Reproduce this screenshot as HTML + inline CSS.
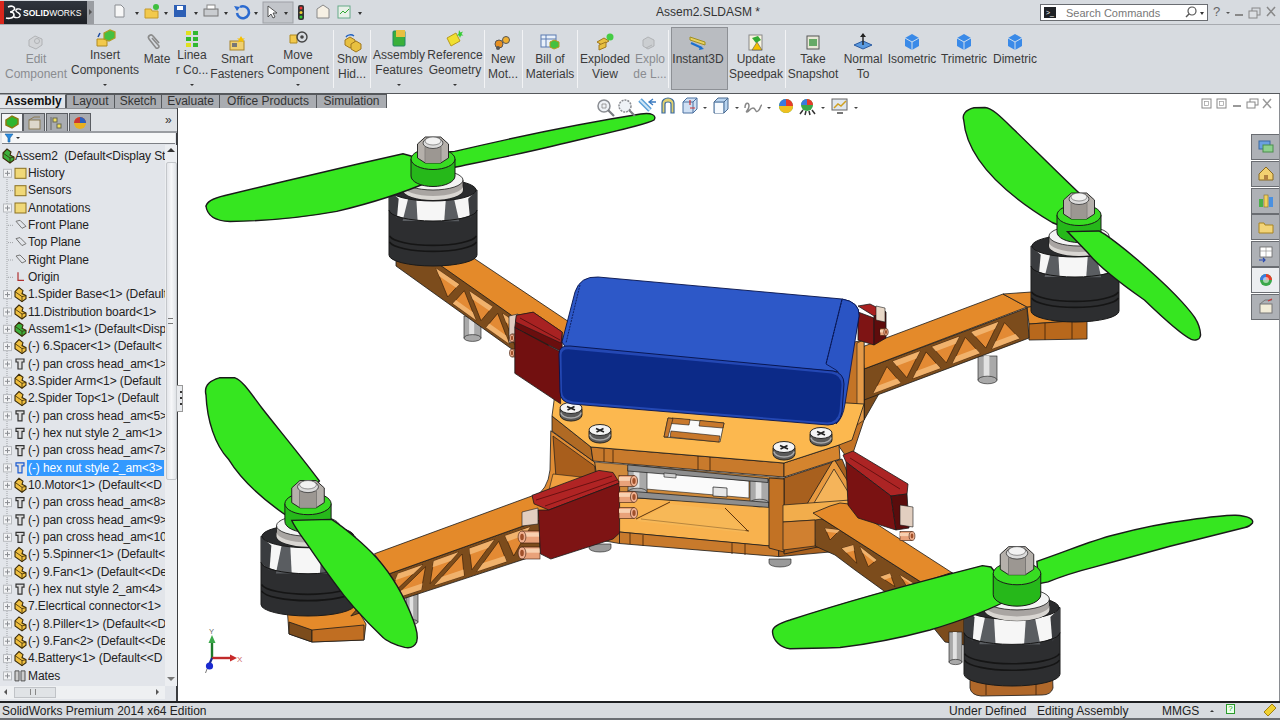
<!DOCTYPE html>
<html><head><meta charset="utf-8">
<style>
*{margin:0;padding:0;box-sizing:border-box}
html,body{width:1280px;height:720px;overflow:hidden;background:#fff;font-family:"Liberation Sans",sans-serif;color:#222}
.a{position:absolute}
#title{left:0;top:0;width:1280px;height:25px;background:#d7dbe0;border-bottom:1px solid #a8abb0}
#logo{left:0;top:1px;width:87px;height:23px;background:linear-gradient(#30353d,#1d2025);border-left:4px solid #d9261c}
#logoarr{left:87px;top:1px;width:7px;height:23px;background:#9a9da2}
#cmd{left:0;top:25px;width:1280px;height:69px;background:#d7dbe0;border-bottom:1px solid #55585c}
.bt{position:absolute;font-size:12px;line-height:15px;text-align:center;white-space:nowrap;color:#3a3a3a}
.gr{color:#8a8c90}
.sep{position:absolute;top:30px;width:1px;height:58px;background:#b4b7bc;border-right:1px solid #f2f3f5}
.dd{position:absolute;width:0;height:0;border-left:2px solid transparent;border-right:2px solid transparent;border-top:2px solid #333}
#tabs{left:0;top:107px;width:386px;height:1px;background:#6d7075}
.tab{position:absolute;top:94px;height:14px;background:#a9acb1;border:1px solid #55585c;border-bottom:none;font-size:12px;line-height:13px;color:#333;text-align:center}
#fm{left:0;top:108px;width:178px;height:593px;background:#e2e5ea;border-right:2px solid #3b3d40;border-top:1px solid #8c8f94}
#vp{left:179px;top:94px;width:1101px;height:607px;background:#fff}
#status{left:0;top:701px;width:1280px;height:19px;background:#d8dbdf;border-top:2px solid #1e1f21}
.st{position:absolute;top:704px;font-size:12px;line-height:15px;color:#222}
.row{position:absolute;left:0;height:17px;font-size:12px;line-height:17px;white-space:nowrap;color:#222;letter-spacing:-0.1px}
.pm{position:absolute;width:9px;height:9px;border:1px solid #a4a7ab;background:#f4f5f7}
.pm:after{content:"";position:absolute;left:1px;top:3px;width:5px;height:1px;background:#555}
.pp:before{content:"";position:absolute;left:3px;top:1px;width:1px;height:5px;background:#555}
.ic{position:absolute;width:12px;height:10px}
</style></head><body>
<div id="title" class="a"></div>
<div id="logo" class="a"></div>
<div id="logoarr" class="a"></div>
<div id="vp" class="a"></div>
<div id="cmd" class="a"></div>
<!-- title bar content -->
<svg class="a" style="left:5px;top:5px" width="18" height="16"><path d="M3 2c4-2 8 0 6 3c-1 1-3 2-4 2c2 0 4 1 4 3c0 3-5 4-8 3" fill="none" stroke="#fff" stroke-width="1.6"/><path d="M16 5c-2-2-6-1-5 1s5 2 4 5c-1 2-4 2-6 1" fill="none" stroke="#fff" stroke-width="1.4"/></svg>
<div class="a" style="left:23px;top:8px;height:10px;font-size:9.5px;line-height:10px;color:#fff;white-space:nowrap;transform:scaleX(0.9);transform-origin:0 0"><b>SOLID</b>WORKS</div>
<div class="a" style="left:89px;top:9px;width:0;height:0;border-top:3px solid transparent;border-bottom:3px solid transparent;border-left:3px solid #555"></div>
<svg class="a" style="left:100px;top:0" width="280" height="25">
 <path d="M15 5h6l3 3v9h-9z" fill="#f7f7f7" stroke="#8a8d92"/>
 <path d="M35 12l2 3l2-3z" fill="#333"/>
 <path d="M45 9h6l1 2h6v7h-13z" fill="#f2c94c" stroke="#c49a2c"/><circle cx="56" cy="7" r="3" fill="#3fbf3f"/>
 <path d="M64 12l2 3l2-3z" fill="#333"/>
 <rect x="74" y="5" width="12" height="12" fill="#2d5fb5"/><rect x="77" y="6" width="6" height="4" fill="#fff"/>
 <path d="M94 12l2 3l2-3z" fill="#333"/>
 <rect x="104" y="9" width="14" height="7" fill="#c9ccd0" stroke="#777"/><rect x="107" y="5" width="8" height="4" fill="#fff" stroke="#888"/>
 <path d="M124 12l2 3l2-3z" fill="#333"/>
 <path d="M137 13a6 6 0 1 0 3-6" fill="none" stroke="#2a6ad0" stroke-width="2.5"/><path d="M134 6l6 1l-3 4z" fill="#2a6ad0"/>
 <path d="M154 12l2 3l2-3z" fill="#333"/>
 <rect x="163" y="2" width="30" height="21" fill="#c2c5ca" stroke="#9da0a5"/>
 <path d="M168 6v11l3-3l2 4l2-1l-2-4h4z" fill="#fff" stroke="#333" stroke-width="0.8"/>
 <path d="M184 12l2 3l2-3z" fill="#333"/>
 <rect x="198" y="5" width="6" height="15" rx="2" fill="#333"/><circle cx="201" cy="8" r="1.5" fill="#e33"/><circle cx="201" cy="12.5" r="1.5" fill="#ec3"/><circle cx="201" cy="17" r="1.5" fill="#3c3"/>
 <path d="M217 9l6-4l6 4v9h-12z" fill="#f6f0e4" stroke="#888"/>
 <rect x="238" y="6" width="12" height="12" fill="#e8f0e8" stroke="#6a8"/><path d="M240 14l3-3l2 2l4-4" stroke="#3a3" fill="none"/>
 <path d="M258 12l2 3l2-3z" fill="#333"/>
</svg>
<div class="a" style="left:656px;top:5px;font-size:12px;line-height:15px;color:#333">Assem2.SLDASM *</div>
<div class="a" style="left:1040px;top:4px;width:168px;height:17px;background:#fff;border:1px solid #6a6d72"></div>
<div class="a" style="left:1044px;top:7px;width:12px;height:11px;background:#1f2226"></div>
<div class="a" style="left:1046px;top:9px;font-size:7px;line-height:7px;color:#fff">&gt;_</div>
<div class="a" style="left:1066px;top:6px;font-size:11px;line-height:14px;color:#777">Search Commands</div>
<svg class="a" style="left:1183px;top:5px" width="24" height="15"><circle cx="9" cy="6" r="4" fill="none" stroke="#555" stroke-width="1.2"/><path d="M6 9l-3 3" stroke="#555" stroke-width="1.5"/><path d="M17 7l2 3l2-3z" fill="#333"/></svg>
<svg class="a" style="left:1210px;top:3px" width="70" height="18">
 <text x="3" y="13" font-size="13" font-family="Liberation Sans" fill="#666">?</text><path d="M16 9l2 2l2-2z" fill="#555"/>
 <rect x="25" y="11" width="8" height="2" fill="#888"/>
 <rect x="42" y="5" width="8" height="7" fill="none" stroke="#888"/><rect x="39" y="8" width="8" height="7" fill="#dcdfe3" stroke="#888"/>
 <path d="M57 4l8 9M65 4l-8 9" stroke="#888" stroke-width="1.5"/>
</svg>

<div id="tabs" class="a"></div>
<!-- command manager -->
<div class="a" style="left:671px;top:27px;width:57px;height:63px;background:#b9bcc1;border:1px solid #8d9095"></div>
<div class="bt gr" style="left:-14px;top:52px;width:100px">Edit</div>
<div class="bt gr" style="left:-14px;top:67px;width:100px">Component</div>
<div class="bt" style="left:55px;top:48px;width:100px">Insert</div>
<div class="bt" style="left:55px;top:63px;width:100px">Components</div>
<div class="dd" style="left:103px;top:84px"></div>
<div class="bt" style="left:107px;top:52px;width:100px">Mate</div>
<div class="bt" style="left:142px;top:48px;width:100px">Linea</div>
<div class="bt" style="left:142px;top:63px;width:100px">r Co...</div>
<div class="dd" style="left:190px;top:84px"></div>
<div class="bt" style="left:187px;top:52px;width:100px">Smart</div>
<div class="bt" style="left:187px;top:67px;width:100px">Fasteners</div>
<div class="bt" style="left:248px;top:48px;width:100px">Move</div>
<div class="bt" style="left:248px;top:63px;width:100px">Component</div>
<div class="dd" style="left:296px;top:84px"></div>
<div class="bt" style="left:302px;top:52px;width:100px">Show</div>
<div class="bt" style="left:302px;top:67px;width:100px">Hid...</div>
<div class="bt" style="left:349px;top:48px;width:100px">Assembly</div>
<div class="bt" style="left:349px;top:63px;width:100px">Features</div>
<div class="dd" style="left:397px;top:84px"></div>
<div class="bt" style="left:405px;top:48px;width:100px">Reference</div>
<div class="bt" style="left:405px;top:63px;width:100px">Geometry</div>
<div class="dd" style="left:453px;top:84px"></div>
<div class="bt" style="left:453px;top:52px;width:100px">New</div>
<div class="bt" style="left:453px;top:67px;width:100px">Mot...</div>
<div class="bt" style="left:500px;top:52px;width:100px">Bill of</div>
<div class="bt" style="left:500px;top:67px;width:100px">Materials</div>
<div class="bt" style="left:555px;top:52px;width:100px">Exploded</div>
<div class="bt" style="left:555px;top:67px;width:100px">View</div>
<div class="bt gr" style="left:600px;top:52px;width:100px">Explo</div>
<div class="bt gr" style="left:600px;top:67px;width:100px">de L...</div>
<div class="bt" style="left:648px;top:52px;width:100px">Instant3D</div>
<div class="bt" style="left:706px;top:52px;width:100px">Update</div>
<div class="bt" style="left:706px;top:67px;width:100px">Speedpak</div>
<div class="bt" style="left:763px;top:52px;width:100px">Take</div>
<div class="bt" style="left:763px;top:67px;width:100px">Snapshot</div>
<div class="bt" style="left:813px;top:52px;width:100px">Normal</div>
<div class="bt" style="left:813px;top:67px;width:100px">To</div>
<div class="bt" style="left:862px;top:52px;width:100px">Isometric</div>
<div class="bt" style="left:914px;top:52px;width:100px">Trimetric</div>
<div class="bt" style="left:965px;top:52px;width:100px">Dimetric</div>
<div class="sep" style="left:333px"></div>
<div class="sep" style="left:370px"></div>
<div class="sep" style="left:484px"></div>
<div class="sep" style="left:522px"></div>
<div class="sep" style="left:577px"></div>
<div class="sep" style="left:668px"></div>
<div class="sep" style="left:785px"></div>
<svg class="a" style="left:0;top:0" width="1100" height="56">
 <g opacity="0.4"><path d="M29 40l6-4l7 3v6l-6 4l-7-3z" fill="#ccc" stroke="#777"/><circle cx="37" cy="41" r="2.5" fill="none" stroke="#777"/></g>
 <path d="M97 39h8l2 2v5h-10z" fill="#f2c94c" stroke="#b08a20"/><path d="M104 33l6-3l5 2v6l-6 3l-5-2z" fill="#46c040" stroke="#b09a20" stroke-width="1.2"/><path d="M98 37l2-4" stroke="#1a4aa0" stroke-width="1.5"/>
 <path d="M152 38l7 8a2 2 0 0 1-3 2l-7-9a2.5 2.5 0 0 1 4-3l6 7" fill="none" stroke="#8a8a8a" stroke-width="1.6"/>
 <rect x="186" y="31" width="5" height="4" fill="#e0e020"/><rect x="193" y="31" width="5" height="4" fill="#30b830"/><rect x="186" y="37" width="5" height="4" fill="#30b830"/><rect x="193" y="37" width="5" height="4" fill="#30b830"/><rect x="186" y="43" width="5" height="4" fill="#e0e020"/><rect x="193" y="43" width="5" height="4" fill="#30b830"/>
 <rect x="230" y="41" width="14" height="9" fill="#f0d070" stroke="#a8842c"/><rect x="232" y="43" width="5" height="4" fill="#777"/><path d="M241 36l1.5 2.5h2.5l-2 1.5l1 2.5l-3-1.5l-3 1.5l1-2.5l-2-1.5h2.5z" fill="#f5c000"/>
 <path d="M290 35h7v8h-7z" fill="#f2c94c" stroke="#b08a20"/><circle cx="302" cy="37" r="5" fill="none" stroke="#444" stroke-width="1.4"/><circle cx="302" cy="37" r="1.8" fill="#444"/>
 <path d="M345 40l5-3l5 3v5l-5 3l-5-3z" fill="#e8c040" stroke="#a07820"/><path d="M351 44l5-3l5 3v5l-5 3l-5-3z" fill="#e8c040" stroke="#a07820"/><path d="M346 37a5 4 0 0 1 8-1" stroke="#2060c0" fill="none" stroke-width="1.4"/>
 <rect x="393" y="31" width="12" height="15" rx="1" fill="#3ab03a" stroke="#286"/><rect x="396" y="30" width="9" height="7" fill="#e8c040"/>
 <path d="M447 38l9-5l4 8l-9 5z" fill="#f0e030" stroke="#b89a20"/><path d="M459 30l1.5 2.5l2.5-1l-1.5 2.5l2 1.5h-2.5l-1 2.5l-1-2.5h-2.5l2-1.5z" fill="#3c3"/>
 <circle cx="499" cy="44" r="4" fill="#e89020" stroke="#555"/><circle cx="506" cy="40" r="3.5" fill="#f0b030" stroke="#555"/><circle cx="498" cy="48" r="2" fill="#555"/>
 <rect x="541" y="35" width="15" height="12" fill="#e8f0fa" stroke="#5a7ab0"/><path d="M541 39h15M546 35v12" stroke="#5a7ab0"/><path d="M550 42l4-2l5 2v5l-5 2l-4-2z" fill="#46c040" stroke="#b89a20"/>
 <path d="M597 42l7-4l5 3l-7 4z" fill="#e8c040" stroke="#a07820"/><path d="M599 45l7-3v5l-7 3z" fill="#e8c040" stroke="#a07820"/><circle cx="610" cy="37" r="3.5" fill="#4c4"/>
 <g opacity="0.4"><path d="M643 40l5-3l6 3v6l-6 3l-5-3z" fill="#bbb" stroke="#777"/><path d="M646 48l6-3" stroke="#777"/></g>
 <path d="M690 37l15 5v3l-15-5z" fill="#e8d060" stroke="#a09020"/><path d="M691 43l11 5" stroke="#1a70d0" stroke-width="2"/><path d="M700 46l4 3l-5 1z" fill="#1a70d0"/>
 <rect x="749" y="35" width="13" height="15" fill="#f8f4e0" stroke="#888"/><path d="M752 38l6-2l3 4l-5 3z" fill="#3a3"/><path d="M757 42l5 8h-10z" fill="#f5c000" stroke="#555" stroke-width="0.6"/>
 <rect x="807" y="36" width="12" height="13" fill="#e8e8d8" stroke="#555"/><rect x="809" y="39" width="8" height="7" fill="#6a6"/>
 <path d="M854 45l9-4l9 4l-9 4z" fill="#5a9ae0" stroke="#2a5aa0"/><path d="M863 45v-11" stroke="#222" stroke-width="1.4"/><path d="M860 37l3-4l3 4z" fill="#222"/>
 <path d="M905 38l7-4l7 4v8l-7 4l-7-4z" fill="#3a8ae8"/><path d="M905 38l7 4l7-4M912 42v8" stroke="#cde" fill="none"/>
 <path d="M957 38l7-4l7 4v8l-7 4l-7-4z" fill="#3a8ae8"/><path d="M957 38l7 4l7-4M964 42v8" stroke="#cde" fill="none"/>
 <path d="M1008 38l7-4l7 4v8l-7 4l-7-4z" fill="#3a8ae8"/><path d="M1008 38l7 4l7-4M1015 42v8" stroke="#cde" fill="none"/>
</svg>
<!-- tabs -->
<div class="tab" style="left:66px;width:49px">Layout</div>
<div class="tab" style="left:114px;width:48px">Sketch</div>
<div class="tab" style="left:161px;width:59px">Evaluate</div>
<div class="tab" style="left:219px;width:98px">Office Products</div>
<div class="tab" style="left:316px;width:71px">Simulation</div>
<div class="a" style="left:0;top:94px;width:66px;height:15px;background:#e2e5ea;border-top:1px solid #9fa2a6;border-right:1px solid #55585c"></div>
<div class="a" style="left:5px;top:94px;font-size:12px;line-height:14px;font-weight:bold;color:#111">Assembly</div>
<div id="fm" class="a"></div>
<!--DRONE-->
<svg class="a" style="left:0;top:0" width="1280" height="720" viewBox="0 0 1280 720"><rect x="464" y="316" width="17" height="22" fill="#a9a9a9" stroke="#1a1a1a" stroke-width="0.6"/>
<rect x="469.1" y="316" width="5.1" height="22" fill="#e2e2e2"/>
<ellipse cx="472.5" cy="338" rx="8.5" ry="3.4000000000000004" fill="#a9a9a9" stroke="#1a1a1a" stroke-width="0.6"/>
<path d="M396.0,256.0 L443.0,266.0 L548.0,341.0 L548.0,375.0 L396.0,266.0 Z" fill="#7c4c1c" stroke="#1a1a1a" stroke-width="0.8"/>
<path d="M436.0,268.3 L459.3,284.2 L447.7,297.0 Z" fill="#e38a34" stroke="#3a2008" stroke-width="0.7"/>
<path d="M436.0,268.3 L459.3,284.2 L456.1,287.8 L439.3,276.3 Z" fill="#f3b877" opacity="0.85"/>
<path d="M452.7,303.6 L476.0,320.2 L464.3,290.6 Z" fill="#e38a34" stroke="#3a2008" stroke-width="0.7"/>
<path d="M452.7,303.6 L476.0,320.2 L472.7,311.9 L455.9,299.9 Z" fill="#f3b877" opacity="0.85"/>
<path d="M469.3,291.0 L492.7,306.8 L481.0,320.7 Z" fill="#e38a34" stroke="#3a2008" stroke-width="0.7"/>
<path d="M469.3,291.0 L492.7,306.8 L489.4,310.7 L472.6,299.3 Z" fill="#f3b877" opacity="0.85"/>
<path d="M486.0,327.4 L509.4,344.0 L497.7,313.4 Z" fill="#e38a34" stroke="#3a2008" stroke-width="0.7"/>
<path d="M486.0,327.4 L509.4,344.0 L506.1,335.4 L489.3,323.5 Z" fill="#f3b877" opacity="0.85"/>
<path d="M502.7,313.6 L526.0,329.5 L514.4,344.3 Z" fill="#e38a34" stroke="#3a2008" stroke-width="0.7"/>
<path d="M502.7,313.6 L526.0,329.5 L522.8,333.6 L506.0,322.2 Z" fill="#f3b877" opacity="0.85"/>
<path d="M519.4,351.2 L542.7,367.8 L531.0,336.2 Z" fill="#e38a34" stroke="#3a2008" stroke-width="0.7"/>
<path d="M519.4,351.2 L542.7,367.8 L539.4,359.0 L522.6,347.0 Z" fill="#f3b877" opacity="0.85"/>
<path d="M396.0,256.0 L440.0,265.0 L548.0,341.0 L590.0,336.0 L469.0,255.0 Z" fill="#e48a2a" stroke="#1a1a1a" stroke-width="0.8"/>
<rect x="978" y="356" width="19" height="24" fill="#a9a9a9" stroke="#1a1a1a" stroke-width="0.6"/>
<rect x="983.7" y="356" width="5.7" height="24" fill="#e2e2e2"/>
<ellipse cx="987.5" cy="380" rx="9.5" ry="3.8000000000000003" fill="#a9a9a9" stroke="#1a1a1a" stroke-width="0.6"/>
<path d="M1027.0,307.0 L1084.0,301.0 L1087.0,320.0 L1029.0,324.0 Z" fill="#e48a2a" stroke="#1a1a1a" stroke-width="0.8"/>
<path d="M1029.0,324.0 L1087.0,320.0 L1087.0,339.0 L1029.0,340.0 Z" fill="#b8681c" stroke="#1a1a1a" stroke-width="0.8"/>
<path d="M1045,323v17 M1072,321v18" stroke="#3a2008" stroke-width="0.8"/>
<path d="M864.0,368.0 L880.0,364.0 L880.0,392.0 L864.0,420.0 Z" fill="#7c4c1c" stroke="#1a1a1a" stroke-width="0.8"/>
<path d="M864.0,369.0 L1027.0,308.0 L1029.0,338.0 L864.0,400.0 Z" fill="#7c4c1c" stroke="#1a1a1a" stroke-width="0.8"/>
<path d="M873.2,393.4 L900.9,383.0 L886.9,366.6 Z" fill="#e38a34" stroke="#3a2008" stroke-width="0.7"/>
<path d="M873.2,393.4 L900.9,383.0 L897.0,378.4 L877.1,385.9 Z" fill="#f3b877" opacity="0.85"/>
<path d="M892.7,361.3 L920.1,351.1 L906.8,377.7 Z" fill="#e38a34" stroke="#3a2008" stroke-width="0.7"/>
<path d="M892.7,361.3 L920.1,351.1 L916.4,358.5 L896.7,365.9 Z" fill="#f3b877" opacity="0.85"/>
<path d="M912.8,378.6 L940.5,368.2 L926.1,351.9 Z" fill="#e38a34" stroke="#3a2008" stroke-width="0.7"/>
<path d="M912.8,378.6 L940.5,368.2 L936.4,363.6 L916.5,371.1 Z" fill="#f3b877" opacity="0.85"/>
<path d="M931.9,346.7 L959.3,336.4 L946.3,362.9 Z" fill="#e38a34" stroke="#3a2008" stroke-width="0.7"/>
<path d="M931.9,346.7 L959.3,336.4 L955.7,343.8 L935.9,351.2 Z" fill="#f3b877" opacity="0.85"/>
<path d="M952.3,363.7 L980.0,353.3 L965.3,337.3 Z" fill="#e38a34" stroke="#3a2008" stroke-width="0.7"/>
<path d="M952.3,363.7 L980.0,353.3 L975.9,348.8 L956.0,356.3 Z" fill="#f3b877" opacity="0.85"/>
<path d="M971.1,332.0 L998.5,321.8 L985.8,348.1 Z" fill="#e38a34" stroke="#3a2008" stroke-width="0.7"/>
<path d="M971.1,332.0 L998.5,321.8 L994.9,329.1 L975.2,336.5 Z" fill="#f3b877" opacity="0.85"/>
<path d="M991.9,348.9 L1019.6,338.5 L1004.5,322.6 Z" fill="#e38a34" stroke="#3a2008" stroke-width="0.7"/>
<path d="M991.9,348.9 L1019.6,338.5 L1015.4,334.0 L995.4,341.5 Z" fill="#f3b877" opacity="0.85"/>
<path d="M862.0,347.0 L1003.0,294.0 L1027.0,307.0 L864.0,369.0 Z" fill="#e48a2a" stroke="#1a1a1a" stroke-width="0.8"/>
<path d="M1003.0,294.0 L1027.0,307.0 L1084.0,301.0 L1060.0,290.0 Z" fill="#e48a2a" stroke="#1a1a1a" stroke-width="0.8"/>
<path d="M389,190.0 V255.0 A44,11.0 0 0 0 477,255.0 V190.0 Z" fill="#2d2e30" stroke="#1a1a1a" stroke-width="1"/>
<path d="M389.5,236.0 A44,11.0 0 0 0 476.5,236.0" fill="none" stroke="#151515" stroke-width="1.6"/>
<path d="M389.5,242.0 A44,11.0 0 0 0 476.5,242.0" fill="none" stroke="#151515" stroke-width="1.6"/>
<path d="M391,190.0 A42,11.0 0 0 0 475,190.0 L475,210.0 A42,11.0 0 0 1 391,210.0 Z" fill="#f6f6f6"/>
<path d="M408.3,197.9 L416.3,197.9 L417.6,220.9 L402.6,220.9 Z" fill="#5a5d61"/>
<path d="M445.9,198.3 L453.9,198.3 L459.2,221.3 L444.2,221.3 Z" fill="#5a5d61"/>
<path d="M389,190.0 L398.68,198.8 L396.92,218.25 L389,210.0 Z" fill="#3a3c3f"/>
<path d="M477,190.0 L468.2,198.8 L469.96,218.25 L477,210.0 Z" fill="#3a3c3f"/>
<ellipse cx="433" cy="190.0" rx="43" ry="11.0" fill="#2a2b2d" stroke="#1a1a1a" stroke-width="1"/>
<path d="M389,210.0 A44,11.0 0 0 0 477,210.0" fill="none" stroke="#151515" stroke-width="1"/>
<path d="M403.0,180.0 V190.0 A30.0,10.0 0 0 0 463.0,190.0 V180.0 Z" fill="#a9a5a2" stroke="#1a1a1a" stroke-width="0.8"/>
<path d="M403.0,190.0 A30.0,10.0 0 0 0 463.0,190.0 L463.0,186.0 A30.0,10.0 0 0 1 403.0,186.0 Z" fill="#d9d6d2"/>
<ellipse cx="433" cy="180.0" rx="30.0" ry="10.0" fill="#f4f4f4" stroke="#1a1a1a" stroke-width="0.8"/>
<path d="M206,207 C206,201 214,198 225,195.5 L275,183.5 L360,163.5 L403,153.8 L411,156 L432,170 L430.5,181 C410,190 380,201 336.7,211.4 C300,218 268,221 230,221.5 C215,221 207,216 205.9,205.5 Z" fill="#36e620" stroke="#1a1a1a" stroke-width="1.4"/>
<path d="M448,152 L454.7,151.4 C520,136 590,122 640.7,114 C652,112 657,116 654,120 C648,124 620,130 553,146 C520,154 480,162 452.5,167.8 Z" fill="#36e620" stroke="#1a1a1a" stroke-width="1.4"/>
<path d="M411.0,159.0 V176.0 A22.0,10.5 0 0 0 455.0,176.0 V159.0 Z" fill="#26b81a" stroke="#1a1a1a" stroke-width="1"/>
<ellipse cx="433" cy="159.0" rx="22.0" ry="10.5" fill="#38dc22" stroke="#1a1a1a" stroke-width="1"/>
<path d="M417.5,144.0 L425.25,137.0 L440.75,137.0 L448.5,144.0 V158.0 L440.75,163.0 L425.25,163.0 L417.5,158.0 Z" fill="#b5b0ab" stroke="#1a1a1a" stroke-width="0.9"/>
<path d="M425.25,147.0 V163.0 M440.75,147.0 V163.0" fill="none" stroke="#444" stroke-width="0.8"/>
<path d="M425.25,147.0 L440.75,147.0 L440.75,163.0 L425.25,163.0 Z" fill="#9c9792"/>
<ellipse cx="433" cy="143.0" rx="10.0" ry="5.5" fill="#dcdcdc" stroke="#333" stroke-width="0.8"/>
<ellipse cx="433" cy="141.0" rx="8.0" ry="4.0" fill="#f2f2f2" stroke="#555" stroke-width="0.6"/>
<path d="M1031,246.0 V311.0 A44,11.0 0 0 0 1119,311.0 V246.0 Z" fill="#2d2e30" stroke="#1a1a1a" stroke-width="1"/>
<path d="M1031.5,292.0 A44,11.0 0 0 0 1118.5,292.0" fill="none" stroke="#151515" stroke-width="1.6"/>
<path d="M1031.5,298.0 A44,11.0 0 0 0 1118.5,298.0" fill="none" stroke="#151515" stroke-width="1.6"/>
<path d="M1033,246.0 A42,11.0 0 0 0 1117,246.0 L1117,266.0 A42,11.0 0 0 1 1033,266.0 Z" fill="#f6f6f6"/>
<path d="M1050.3,253.9 L1058.3,253.9 L1059.6,276.9 L1044.6,276.9 Z" fill="#5a5d61"/>
<path d="M1087.9,254.3 L1095.9,254.3 L1101.2,277.3 L1086.2,277.3 Z" fill="#5a5d61"/>
<path d="M1031,246.0 L1040.68,254.8 L1038.92,274.25 L1031,266.0 Z" fill="#3a3c3f"/>
<path d="M1119,246.0 L1110.2,254.8 L1111.96,274.25 L1119,266.0 Z" fill="#3a3c3f"/>
<ellipse cx="1075" cy="246.0" rx="43" ry="11.0" fill="#2a2b2d" stroke="#1a1a1a" stroke-width="1"/>
<path d="M1031,266.0 A44,11.0 0 0 0 1119,266.0" fill="none" stroke="#151515" stroke-width="1"/>
<path d="M1049.0,236.0 V246.0 A30.0,10.0 0 0 0 1109.0,246.0 V236.0 Z" fill="#a9a5a2" stroke="#1a1a1a" stroke-width="0.8"/>
<path d="M1049.0,246.0 A30.0,10.0 0 0 0 1109.0,246.0 L1109.0,242.0 A30.0,10.0 0 0 1 1049.0,242.0 Z" fill="#d9d6d2"/>
<ellipse cx="1079" cy="236.0" rx="30.0" ry="10.0" fill="#f4f4f4" stroke="#1a1a1a" stroke-width="0.8"/>
<path d="M1079.4,193.3 C1060,175 1030,145 1013.3,129 C1000,116 992,108 985,107.5 L974,107.8 C965,110 962,115 963.7,120 C966,150 990,185 1052.2,222.5 L1075,232 Z" fill="#36e620" stroke="#1a1a1a" stroke-width="1.4"/>
<path d="M1057.0,215.0 V232.0 A22.0,10.5 0 0 0 1101.0,232.0 V215.0 Z" fill="#26b81a" stroke="#1a1a1a" stroke-width="1"/>
<ellipse cx="1079" cy="215.0" rx="22.0" ry="10.5" fill="#38dc22" stroke="#1a1a1a" stroke-width="1"/>
<path d="M1063.5,200.0 L1071.25,193.0 L1086.75,193.0 L1094.5,200.0 V214.0 L1086.75,219.0 L1071.25,219.0 L1063.5,214.0 Z" fill="#b5b0ab" stroke="#1a1a1a" stroke-width="0.9"/>
<path d="M1071.25,203.0 V219.0 M1086.75,203.0 V219.0" fill="none" stroke="#444" stroke-width="0.8"/>
<path d="M1071.25,203.0 L1086.75,203.0 L1086.75,219.0 L1071.25,219.0 Z" fill="#9c9792"/>
<ellipse cx="1079" cy="199.0" rx="10.0" ry="5.5" fill="#dcdcdc" stroke="#333" stroke-width="0.8"/>
<ellipse cx="1079" cy="197.0" rx="8.0" ry="4.0" fill="#f2f2f2" stroke="#555" stroke-width="0.6"/>
<path d="M1067.5,231.6 L1099,231 L1105,234.4 C1130,252 1165,283 1181.9,301.9 C1192,313 1200,322 1200.6,335 C1200,340 1195,341 1191.3,339.4 C1182,335 1160,315 1144.4,300 C1120,283 1100,268 1088,253 Z" fill="#36e620" stroke="#1a1a1a" stroke-width="1.4"/>
<path d="M840.0,345.0 L864.0,340.0 L864.0,420.0 L850.0,462.0 L838.0,445.0 L840.0,400.0 Z" fill="#c47426" stroke="#1a1a1a" stroke-width="0.8"/>
<path d="M857.0,343.0 L864.0,340.0 L864.0,420.0 L857.0,425.0 Z" fill="#e49a48" stroke="#1a1a1a" stroke-width="0.6"/>
<path d="M548.0,492.0 L600.0,496.0 L780.0,506.0 L852.0,494.0 L885.0,516.0 L852.0,540.0 L779.0,547.0 L619.0,532.0 L548.0,520.0 Z" fill="#f8b24e" stroke="#1a1a1a" stroke-width="0.8"/>
<path d="M636,519 L670,502 M725,508 L748,531 M641,519 L749,531" stroke="#5a3510" stroke-width="1" fill="none"/>
<path d="M636,521 L670,504 L725,510 L748,533 Z" fill="#f7bd5e" opacity="0.6"/>
<path d="M548.0,520.0 L619.5,532.0 L619.5,543.5 L548.0,531.0 Z" fill="#c87a2c" stroke="#1a1a1a" stroke-width="0.8"/>
<path d="M619.5,532.0 L778.7,546.8 L778.7,556.6 L619.5,543.5 Z" fill="#c87a2c" stroke="#1a1a1a" stroke-width="0.8"/>
<path d="M630,533v11 M643,535v11 M732,543v11 M745,544v11" stroke="#3a2008" stroke-width="0.8"/>
<path d="M778.7,546.8 L852.0,540.0 L852.0,550.0 L778.7,556.6 Z" fill="#a8601e" stroke="#1a1a1a" stroke-width="0.8"/>
<path d="M594.0,462.0 L784.0,478.0 L784.0,506.0 L600.0,494.0 Z" fill="#d08a3a" stroke="#1a1a1a" stroke-width="0.6"/>
<path d="M646.0,471.0 L749.0,481.0 L749.0,498.0 L646.0,489.0 Z" fill="#fafafa" stroke="#1a1a1a" stroke-width="0.6"/>
<rect x="628" y="468" width="19" height="24" fill="#a9a9a9" stroke="#1a1a1a" stroke-width="0.6"/>
<rect x="633.7" y="468" width="5.7" height="24" fill="#e2e2e2"/>
<ellipse cx="637.5" cy="492" rx="9.5" ry="3.8000000000000003" fill="#a9a9a9" stroke="#1a1a1a" stroke-width="0.6"/>
<rect x="750" y="480" width="19" height="23" fill="#a9a9a9" stroke="#1a1a1a" stroke-width="0.6"/>
<rect x="755.7" y="480" width="5.7" height="23" fill="#e2e2e2"/>
<ellipse cx="759.5" cy="503" rx="9.5" ry="3.8000000000000003" fill="#a9a9a9" stroke="#1a1a1a" stroke-width="0.6"/>
<path d="M627.7,464.8 L768.0,478.7 L768.0,482.5 L627.7,471.0 Z" fill="#8e8e8e" stroke="#1a1a1a" stroke-width="0.7"/>
<path d="M627.7,491.0 L768.8,502.5 L768.8,507.4 L632.7,497.6 Z" fill="#8e8e8e" stroke="#1a1a1a" stroke-width="0.7"/>
<path d="M664.0,473.0 L676.0,474.0 L676.0,478.0 L664.0,477.0 Z" fill="#d0d0d0" stroke="#1a1a1a" stroke-width="0.6"/>
<path d="M713.0,487.0 L727.0,488.0 L727.0,497.0 L713.0,496.0 Z" fill="#e6e6e6" stroke="#1a1a1a" stroke-width="0.7"/>
<path d="M550.8,430.8 L594.6,462 L600,498 L545,510 L533,498 Q548,490 550,470 Z" fill="#e08c34" stroke="#1a1a1a" stroke-width="0.8"/>
<path d="M553.0,436.0 L594.6,466.0 L598.0,490.0 L556.0,478.0 Z" fill="#a85e1c" stroke="#1a1a1a" stroke-width="0.7"/>
<path d="M553.0,474.0 L590.0,478.0 L598.0,494.0 L548.0,494.0 Z" fill="#f0a040" stroke="#1a1a1a" stroke-width="0.6"/>
<path d="M784.0,478.0 L842.0,459.0 L862.0,509.0 L852.0,540.0 L784.0,554.0 Z" fill="#a8601e" stroke="#1a1a1a" stroke-width="0.8"/>
<path d="M769.0,478.0 L784.0,479.0 L784.0,552.0 L769.0,548.0 Z" fill="#c27224" stroke="#1a1a1a" stroke-width="0.8"/>
<path d="M804.0,509.0 L834.0,459.0 L866.0,511.0 Z" fill="#e89a40" stroke="#1a1a1a" stroke-width="0.8"/>
<path d="M814.0,503.0 L834.0,469.0 L856.0,505.0 Z" fill="#f5b45a" stroke="#1a1a1a" stroke-width="0.7"/>
<path d="M552.0,416.0 L591.0,447.0 L593.0,461.0 L552.0,431.0 Z" fill="#b06a24" stroke="#1a1a1a" stroke-width="0.8"/>
<path d="M591.0,447.0 L784.0,463.0 L784.0,477.0 L593.0,461.0 Z" fill="#c87a2c" stroke="#1a1a1a" stroke-width="0.8"/>
<path d="M784.0,463.0 L839.0,445.0 L840.0,459.0 L784.0,477.0 Z" fill="#d4842e" stroke="#1a1a1a" stroke-width="0.8"/>
<path d="M604,449v13 M613,450v13 M698,456v14 M710,457v14" stroke="#3a2008" stroke-width="0.8"/>
<path d="M556.0,386.0 L864.0,404.0 L852.0,440.0 L839.0,445.0 L784.0,463.0 L591.0,447.0 L552.0,416.0 Z" fill="#fcb84f" stroke="#1a1a1a" stroke-width="0.8"/>
<path d="M668.0,418.0 L724.0,423.0 L720.0,442.0 L664.0,437.0 Z" fill="#fafafa" stroke="#1a1a1a" stroke-width="0.7"/>
<path d="M672.0,418.0 L690.0,419.5 L689.0,425.0 L671.0,423.5 Z" fill="#c8782c" stroke="#1a1a1a" stroke-width="0.6"/>
<path d="M700.0,420.5 L724.0,423.0 L723.0,428.0 L699.0,426.0 Z" fill="#c8782c" stroke="#1a1a1a" stroke-width="0.6"/>
<path d="M671.0,431.0 L720.0,436.0 L719.0,442.0 L670.0,437.0 Z" fill="#c8782c" stroke="#1a1a1a" stroke-width="0.6"/>
<path d="M668.0,418.0 L673.0,418.5 L668.0,437.0 L664.0,437.0 Z" fill="#c8782c" stroke="#1a1a1a" stroke-width="0.6"/>
<path d="M560,409 V415 A11,6.050000000000001 0 0 0 582,415 V409 Z" fill="#5a5a5a" stroke="#1a1a1a" stroke-width="0.9"/>
<path d="M561,412.5 A10,5.5 0 0 0 581,412.5" fill="none" stroke="#a8a8a8" stroke-width="1.5"/>
<ellipse cx="571" cy="408" rx="11" ry="5.5" fill="#f4f4f4" stroke="#1a1a1a" stroke-width="0.9"/>
<path d="M567,406.5 l8,3.5 M574.5,406.5 l-7,3.5" stroke="#222" stroke-width="1.6"/>
<path d="M589,431 V437 A11,6.050000000000001 0 0 0 611,437 V431 Z" fill="#5a5a5a" stroke="#1a1a1a" stroke-width="0.9"/>
<path d="M590,434.5 A10,5.5 0 0 0 610,434.5" fill="none" stroke="#a8a8a8" stroke-width="1.5"/>
<ellipse cx="600" cy="430" rx="11" ry="5.5" fill="#f4f4f4" stroke="#1a1a1a" stroke-width="0.9"/>
<path d="M596,428.5 l8,3.5 M603.5,428.5 l-7,3.5" stroke="#222" stroke-width="1.6"/>
<path d="M773,448 V454 A11,6.050000000000001 0 0 0 795,454 V448 Z" fill="#5a5a5a" stroke="#1a1a1a" stroke-width="0.9"/>
<path d="M774,451.5 A10,5.5 0 0 0 794,451.5" fill="none" stroke="#a8a8a8" stroke-width="1.5"/>
<ellipse cx="784" cy="447" rx="11" ry="5.5" fill="#f4f4f4" stroke="#1a1a1a" stroke-width="0.9"/>
<path d="M780,445.5 l8,3.5 M787.5,445.5 l-7,3.5" stroke="#222" stroke-width="1.6"/>
<path d="M810,434 V440 A11,6.050000000000001 0 0 0 832,440 V434 Z" fill="#5a5a5a" stroke="#1a1a1a" stroke-width="0.9"/>
<path d="M811,437.5 A10,5.5 0 0 0 831,437.5" fill="none" stroke="#a8a8a8" stroke-width="1.5"/>
<ellipse cx="821" cy="433" rx="11" ry="5.5" fill="#f4f4f4" stroke="#1a1a1a" stroke-width="0.9"/>
<path d="M817,431.5 l8,3.5 M824.5,431.5 l-7,3.5" stroke="#222" stroke-width="1.6"/>
<path d="M589,544 V548 A11,4 0 0 0 611,548 V544 Z" fill="#9a9a9a" stroke="#1a1a1a" stroke-width="0.6"/>
<path d="M769,559 V563 A11,4 0 0 0 791,563 V559 Z" fill="#9a9a9a" stroke="#1a1a1a" stroke-width="0.6"/>
<path d="M509.0,316.0 L518.0,314.0 L518.0,341.0 L509.0,343.0 Z" fill="#e0ccc0" stroke="#1a1a1a" stroke-width="0.6"/>
<rect x="512" y="334" width="6" height="8" fill="#e9a27a" stroke="#3a1a0a" stroke-width="0.6"/>
<rect x="512" y="335.5" width="6" height="2.8" fill="#f8d0b0"/>
<ellipse cx="512" cy="338" rx="2.6" ry="4" fill="#f0b090" stroke="#3a1a0a" stroke-width="0.6"/><ellipse cx="512" cy="338" rx="1.2" ry="2.2" fill="#a0502a"/>
<rect x="512" y="349" width="6" height="8" fill="#e9a27a" stroke="#3a1a0a" stroke-width="0.6"/>
<rect x="512" y="350.5" width="6" height="2.8" fill="#f8d0b0"/>
<ellipse cx="512" cy="353" rx="2.6" ry="4" fill="#f0b090" stroke="#3a1a0a" stroke-width="0.6"/><ellipse cx="512" cy="353" rx="1.2" ry="2.2" fill="#a0502a"/>
<path d="M516.4,315.3 L533.2,312.2 L562.2,332.0 L562.2,352.0 L514.8,327.5 Z" fill="#6a0e0e" stroke="#1a1a1a" stroke-width="0.8"/>
<path d="M516.4,315.3 L533.2,312.2 L562.2,332.0 L561.0,343.0 L515.5,322.0 Z" fill="#a82222" stroke="#1a1a1a" stroke-width="0.6"/>
<path d="M514.8,327.5 L560.6,352.0 L560.6,403.8 L514.8,373.3 Z" fill="#721010" stroke="#1a1a1a" stroke-width="0.8"/>
<path d="M520,318 L560,340" stroke="#3a0808" stroke-width="0.7"/>
<path d="M858.0,306.0 L870.0,304.0 L886.0,312.0 L874.0,316.0 Z" fill="#a82020" stroke="#1a1a1a" stroke-width="0.8"/>
<path d="M858.0,312.0 L874.0,318.0 L874.0,345.0 L858.0,340.0 Z" fill="#7e1414" stroke="#1a1a1a" stroke-width="0.8"/>
<path d="M874.0,316.0 L886.0,312.0 L886.0,338.0 L874.0,345.0 Z" fill="#5e0c0c" stroke="#1a1a1a" stroke-width="0.8"/>
<path d="M876.0,306.0 L885.0,308.0 L885.0,322.0 L876.0,320.0 Z" fill="#e8d8c8" stroke="#1a1a1a" stroke-width="0.6"/>
<rect x="880" y="328.5" width="6" height="7.0" fill="#e9a27a" stroke="#3a1a0a" stroke-width="0.6"/>
<rect x="880" y="330.0" width="6" height="2.4499999999999997" fill="#f8d0b0"/>
<ellipse cx="886" cy="332" rx="2.275" ry="3.5" fill="#f0b090" stroke="#3a1a0a" stroke-width="0.6"/><ellipse cx="886" cy="332" rx="1.05" ry="1.9250000000000003" fill="#a0502a"/>
<path d="M562,342 L575,292 Q580,276 598,277 L842,299 Q860,302 859,316 L845,392 L842,372 L566,348 Z" fill="#2d58c8" stroke="#06124a" stroke-width="0.9"/>
<path d="M842,299 Q860,302 859,316 L845,404 Q843,418 836,424 L838,378 Q840,372 836,370 L826,364 Z" fill="#2a54c4" stroke="#06124a" stroke-width="0.8"/>
<path d="M559,354 Q559,345 570,346 L833,371 Q844,373 844,384 L842,412 Q840,425 828,425 L572,404 Q560,402 560,392 Z" fill="#2448b4" stroke="#06124a" stroke-width="0.9"/>
<path d="M561.5,355 Q561.5,348.5 570.5,349.5 L831.5,373.5 Q841.5,375.5 841.5,385 L839.5,411.5 Q837.5,422.5 827,422.5 L573,401.5 Q562,400 562,391 Z" fill="#0c2a88"/>
<path d="M580,285 L566,343 M842,300 L826,364" stroke="#06124a" stroke-width="0.8" fill="none" stroke-dasharray="2 1"/>
<rect x="406" y="594" width="12" height="28" fill="#a9a9a9" stroke="#1a1a1a" stroke-width="0.6"/>
<rect x="409.6" y="594" width="3.5999999999999996" height="28" fill="#e2e2e2"/>
<ellipse cx="412.0" cy="622" rx="6.0" ry="2.4000000000000004" fill="#a9a9a9" stroke="#1a1a1a" stroke-width="0.6"/>
<path d="M287.0,606.0 L352.0,600.0 L366.0,624.0 L364.0,640.0 L312.0,642.0 L289.0,634.0 Z" fill="#e48a2a" stroke="#1a1a1a" stroke-width="0.8"/>
<path d="M289.0,622.0 L312.0,630.0 L312.0,642.0 L289.0,634.0 Z" fill="#7c4c1c" stroke="#1a1a1a" stroke-width="0.8"/>
<path d="M312.0,630.0 L364.0,625.0 L364.0,640.0 L312.0,642.0 Z" fill="#c06e22" stroke="#1a1a1a" stroke-width="0.8"/>
<path d="M388.6,574.0 L540.0,520.0 L540.0,554.0 L350.8,616.0 Z" fill="#7c4c1c" stroke="#1a1a1a" stroke-width="0.8"/>
<path d="M397.9,573.6 L422.9,564.7 L388.3,597.6 Z" fill="#e38a34" stroke="#3a2008" stroke-width="0.7"/>
<path d="M397.9,573.6 L422.9,564.7 L413.2,574.0 L395.2,580.3 Z" fill="#f3b877" opacity="0.85"/>
<path d="M391.6,599.6 L421.4,589.7 L425.5,566.8 Z" fill="#e38a34" stroke="#3a2008" stroke-width="0.7"/>
<path d="M391.6,599.6 L421.4,589.7 L422.6,583.3 L401.1,590.4 Z" fill="#f3b877" opacity="0.85"/>
<path d="M433.6,561.0 L458.6,552.1 L430.1,583.7 Z" fill="#e38a34" stroke="#3a2008" stroke-width="0.7"/>
<path d="M433.6,561.0 L458.6,552.1 L450.6,561.0 L432.6,567.3 Z" fill="#f3b877" opacity="0.85"/>
<path d="M434.2,585.5 L464.1,575.7 L462.1,554.0 Z" fill="#e38a34" stroke="#3a2008" stroke-width="0.7"/>
<path d="M434.2,585.5 L464.1,575.7 L463.5,569.6 L442.0,576.7 Z" fill="#f3b877" opacity="0.85"/>
<path d="M469.3,548.4 L494.3,539.5 L471.9,569.9 Z" fill="#e38a34" stroke="#3a2008" stroke-width="0.7"/>
<path d="M469.3,548.4 L494.3,539.5 L488.0,548.0 L470.0,554.4 Z" fill="#f3b877" opacity="0.85"/>
<path d="M476.9,571.4 L506.7,561.6 L498.7,541.3 Z" fill="#e38a34" stroke="#3a2008" stroke-width="0.7"/>
<path d="M476.9,571.4 L506.7,561.6 L504.5,555.9 L483.0,563.0 Z" fill="#f3b877" opacity="0.85"/>
<path d="M505.0,535.8 L530.0,526.9 L513.7,556.0 Z" fill="#e38a34" stroke="#3a2008" stroke-width="0.7"/>
<path d="M505.0,535.8 L530.0,526.9 L525.4,535.1 L507.4,541.4 Z" fill="#f3b877" opacity="0.85"/>
<path d="M374.4,553.8 L540.0,493.0 L560.0,486.0 L550.0,512.0 L540.0,520.0 L388.6,574.0 Z" fill="#e48a2a" stroke="#1a1a1a" stroke-width="0.8"/>
<path d="M905.0,578.0 L951.7,572.5 L990.0,598.0 L985.0,648.0 L945.0,642.0 L915.0,605.0 Z" fill="#7c4c1c" stroke="#1a1a1a" stroke-width="0.8"/>
<path d="M921.7,582.5 L951.7,572.5 L990.0,598.0 L960.0,612.0 Z" fill="#e48a2a" stroke="#1a1a1a" stroke-width="0.8"/>
<rect x="949" y="632" width="13" height="30" fill="#a9a9a9" stroke="#1a1a1a" stroke-width="0.6"/>
<rect x="952.9" y="632" width="3.9" height="30" fill="#e2e2e2"/>
<ellipse cx="955.5" cy="662" rx="6.5" ry="2.6" fill="#a9a9a9" stroke="#1a1a1a" stroke-width="0.6"/>
<path d="M813.0,513.0 L921.7,582.5 L896.7,590.0 L885.0,591.7 L855.0,570.0 L835.0,555.0 L815.0,546.0 Z" fill="#7c4c1c" stroke="#1a1a1a" stroke-width="0.8"/>
<path d="M783.0,505.0 L850.0,500.0 L868.0,512.0 L815.0,520.0 L783.0,522.0 Z" fill="#f2ad4c" stroke="#1a1a1a" stroke-width="0.7"/>
<path d="M783.0,522.0 L815.0,520.0 L815.0,546.0 L783.0,550.0 Z" fill="#d08030" stroke="#1a1a1a" stroke-width="0.7"/>
<path d="M825.0,528.3 L840.0,530.0 L830.0,540.0 Z" fill="#e38a34" stroke="#3a2008" stroke-width="0.7"/>
<path d="M825.0,528.3 L840.0,530.0 L837.0,533.0 L826.5,531.8 Z" fill="#f3b877" opacity="0.85"/>
<path d="M841.7,548.3 L853.3,545.0 L856.7,563.3 Z" fill="#e38a34" stroke="#3a2008" stroke-width="0.7"/>
<path d="M841.7,548.3 L853.3,545.0 L854.3,550.5 L846.2,552.8 Z" fill="#f3b877" opacity="0.85"/>
<path d="M860.0,546.7 L876.7,560.0 L868.3,566.7 Z" fill="#e38a34" stroke="#3a2008" stroke-width="0.7"/>
<path d="M860.0,546.7 L876.7,560.0 L874.2,562.0 L862.5,552.7 Z" fill="#f3b877" opacity="0.85"/>
<path d="M880.0,576.7 L890.0,573.3 L895.0,586.7 Z" fill="#e38a34" stroke="#3a2008" stroke-width="0.7"/>
<path d="M880.0,576.7 L890.0,573.3 L891.5,577.3 L884.5,579.7 Z" fill="#f3b877" opacity="0.85"/>
<path d="M900.0,575.0 L913.3,583.3 L906.7,586.7 Z" fill="#e38a34" stroke="#3a2008" stroke-width="0.7"/>
<path d="M900.0,575.0 L913.3,583.3 L911.3,584.3 L902.0,578.5 Z" fill="#f3b877" opacity="0.85"/>
<path d="M840.0,503.0 L858.0,505.0 L858.0,512.0 L951.7,572.5 L921.7,582.5 L813.0,513.0 L830.0,506.0 Z" fill="#e48a2a" stroke="#1a1a1a" stroke-width="0.8"/>
<path d="M970,668 L1052,664 L1053,688 Q1051,695 1042,695 L981,696 Q971,695 970,688 Z" fill="#b0682a" stroke="#1a1a1a" stroke-width="0.8"/>
<path d="M986,672v23 M1036,670v25" stroke="#3a2008" stroke-width="0.8"/>
<rect x="522" y="531" width="18" height="12" fill="#e9a27a" stroke="#3a1a0a" stroke-width="0.6"/>
<rect x="522" y="532.5" width="18" height="4.199999999999999" fill="#f8d0b0"/>
<ellipse cx="522" cy="537" rx="3.9000000000000004" ry="6" fill="#f0b090" stroke="#3a1a0a" stroke-width="0.6"/><ellipse cx="522" cy="537" rx="1.7999999999999998" ry="3.3000000000000003" fill="#a0502a"/>
<rect x="522" y="547" width="18" height="12" fill="#e9a27a" stroke="#3a1a0a" stroke-width="0.6"/>
<rect x="522" y="548.5" width="18" height="4.199999999999999" fill="#f8d0b0"/>
<ellipse cx="522" cy="553" rx="3.9000000000000004" ry="6" fill="#f0b090" stroke="#3a1a0a" stroke-width="0.6"/><ellipse cx="522" cy="553" rx="1.7999999999999998" ry="3.3000000000000003" fill="#a0502a"/>
<path d="M522.0,512.0 L538.0,508.0 L538.0,524.0 L522.0,526.0 Z" fill="#e2cfc0" stroke="#1a1a1a" stroke-width="0.6"/>
<path d="M532.0,495.4 L598.8,470.4 L613.0,472.5 L619.6,483.0 L548.8,510.0 L534.0,503.8 Z" fill="#b02424" stroke="#1a1a1a" stroke-width="0.8"/>
<path d="M548.8,510.0 L619.6,483.0 L619.6,533.0 L613.0,539.0 L550.8,559.0 L540.4,553.8 L538.3,510.0 Z" fill="#7e1414" stroke="#1a1a1a" stroke-width="0.8"/>
<path d="M536,500 L612,476 M545,506 L617,480" stroke="#4a0808" stroke-width="0.7" fill="none"/>
<rect x="619" y="475.5" width="15" height="11.0" fill="#e9a27a" stroke="#3a1a0a" stroke-width="0.6"/>
<rect x="619" y="477.0" width="15" height="3.8499999999999996" fill="#f8d0b0"/>
<ellipse cx="634" cy="481" rx="3.575" ry="5.5" fill="#f0b090" stroke="#3a1a0a" stroke-width="0.6"/><ellipse cx="634" cy="481" rx="1.65" ry="3.0250000000000004" fill="#a0502a"/>
<rect x="619" y="491.5" width="15" height="11.0" fill="#e9a27a" stroke="#3a1a0a" stroke-width="0.6"/>
<rect x="619" y="493.0" width="15" height="3.8499999999999996" fill="#f8d0b0"/>
<ellipse cx="634" cy="497" rx="3.575" ry="5.5" fill="#f0b090" stroke="#3a1a0a" stroke-width="0.6"/><ellipse cx="634" cy="497" rx="1.65" ry="3.0250000000000004" fill="#a0502a"/>
<rect x="619" y="507.5" width="15" height="11.0" fill="#e9a27a" stroke="#3a1a0a" stroke-width="0.6"/>
<rect x="619" y="509.0" width="15" height="3.8499999999999996" fill="#f8d0b0"/>
<ellipse cx="634" cy="513" rx="3.575" ry="5.5" fill="#f0b090" stroke="#3a1a0a" stroke-width="0.6"/><ellipse cx="634" cy="513" rx="1.65" ry="3.0250000000000004" fill="#a0502a"/>
<path d="M843.0,455.0 L853.0,451.0 L908.0,484.0 L907.0,494.0 L891.0,496.0 L846.0,462.0 Z" fill="#ac2424" stroke="#1a1a1a" stroke-width="0.8"/>
<path d="M846.0,462.0 L891.0,496.0 L896.0,530.0 L858.0,518.0 L848.0,505.0 Z" fill="#7a1212" stroke="#1a1a1a" stroke-width="0.8"/>
<path d="M891.0,496.0 L907.0,494.0 L909.0,528.0 L896.0,530.0 Z" fill="#5a0c0c" stroke="#1a1a1a" stroke-width="0.8"/>
<path d="M850,458 L900,489" stroke="#4a0808" stroke-width="0.7"/>
<path d="M900.0,505.0 L913.0,507.0 L913.0,527.0 L900.0,525.0 Z" fill="#e2cfc0" stroke="#1a1a1a" stroke-width="0.6"/>
<rect x="900" y="531.5" width="12" height="9.0" fill="#e9a27a" stroke="#3a1a0a" stroke-width="0.6"/>
<rect x="900" y="533.0" width="12" height="3.15" fill="#f8d0b0"/>
<ellipse cx="912" cy="536" rx="2.9250000000000003" ry="4.5" fill="#f0b090" stroke="#3a1a0a" stroke-width="0.6"/><ellipse cx="912" cy="536" rx="1.3499999999999999" ry="2.475" fill="#a0502a"/>
<path d="M261,536.2 V604.45 A47,11.55 0 0 0 355,604.45 V536.2 Z" fill="#2d2e30" stroke="#1a1a1a" stroke-width="1"/>
<path d="M261.5,584.5 A47,11.55 0 0 0 354.5,584.5" fill="none" stroke="#151515" stroke-width="1.6"/>
<path d="M261.5,590.8000000000001 A47,11.55 0 0 0 354.5,590.8000000000001" fill="none" stroke="#151515" stroke-width="1.6"/>
<path d="M263,536.2 A45,11.55 0 0 0 353,536.2 L353,562.2 A45,11.55 0 0 1 263,562.2 Z" fill="#f6f6f6"/>
<path d="M281.8,544.6 L290.2,544.6 L291.7,573.6 L275.9,573.6 Z" fill="#5a5d61"/>
<path d="M321.8,545.0 L330.2,545.0 L335.7,574.0 L319.9,574.0 Z" fill="#5a5d61"/>
<path d="M261,536.2 L271.34,545.44 L269.46,570.8625000000001 L261,562.2 Z" fill="#3a3c3f"/>
<path d="M355,536.2 L345.6,545.44 L347.48,570.8625000000001 L355,562.2 Z" fill="#3a3c3f"/>
<ellipse cx="308" cy="536.2" rx="46" ry="11.55" fill="#2a2b2d" stroke="#1a1a1a" stroke-width="1"/>
<path d="M261,562.2 A47,11.55 0 0 0 355,562.2" fill="none" stroke="#151515" stroke-width="1"/>
<path d="M276.5,525.7 V536.2 A31.5,10.5 0 0 0 339.5,536.2 V525.7 Z" fill="#a9a5a2" stroke="#1a1a1a" stroke-width="0.8"/>
<path d="M276.5,536.2 A31.5,10.5 0 0 0 339.5,536.2 L339.5,532.0 A31.5,10.5 0 0 1 276.5,532.0 Z" fill="#d9d6d2"/>
<ellipse cx="308" cy="525.7" rx="31.5" ry="10.5" fill="#f4f4f4" stroke="#1a1a1a" stroke-width="0.8"/>
<path d="M319.4,481 C300,455 275,425 261.7,407.8 C250,392 242,380 235,377.8 L219.4,377.8 C208,381 204,387 206,395 C207,420 215,445 228.3,458.9 C240,478 260,498 290,518 Z" fill="#36e620" stroke="#1a1a1a" stroke-width="1.4"/>
<path d="M284.9,503.65 V521.5 A23.1,11.025 0 0 0 331.1,521.5 V503.65 Z" fill="#26b81a" stroke="#1a1a1a" stroke-width="1"/>
<ellipse cx="308" cy="503.65" rx="23.1" ry="11.025" fill="#38dc22" stroke="#1a1a1a" stroke-width="1"/>
<path d="M291.725,487.9 L299.8625,480.54999999999995 L316.1375,480.54999999999995 L324.275,487.9 V502.6 L316.1375,507.85 L299.8625,507.85 L291.725,502.6 Z" fill="#b5b0ab" stroke="#1a1a1a" stroke-width="0.9"/>
<path d="M299.8625,491.04999999999995 V507.85 M316.1375,491.04999999999995 V507.85" fill="none" stroke="#444" stroke-width="0.8"/>
<path d="M299.8625,491.04999999999995 L316.1375,491.04999999999995 L316.1375,507.85 L299.8625,507.85 Z" fill="#9c9792"/>
<ellipse cx="308" cy="486.84999999999997" rx="10.5" ry="5.775" fill="#dcdcdc" stroke="#333" stroke-width="0.8"/>
<ellipse cx="308" cy="484.74999999999994" rx="8.4" ry="4.2" fill="#f2f2f2" stroke="#555" stroke-width="0.6"/>
<path d="M291.8,520.4 L331.6,519.4 C345,528 365,545 376.8,558 C392,575 405,598 413.4,620.5 C417,630 418,638 416.6,642 C414,648 408,648 404.8,647.4 C395,645 385,640 383.3,637.7 C370,625 350,605 333.8,581.8 C325,570 318,560 312.3,551.6 C303,538 295,528 291.8,520.4 Z" fill="#36e620" stroke="#1a1a1a" stroke-width="1.4"/>
<path d="M964,607.52 V674.12 A48,11.88 0 0 0 1060,674.12 V607.52 Z" fill="#2d2e30" stroke="#1a1a1a" stroke-width="1"/>
<path d="M964.5,653.6 A48,11.88 0 0 0 1059.5,653.6" fill="none" stroke="#151515" stroke-width="1.6"/>
<path d="M964.5,660.08 A48,11.88 0 0 0 1059.5,660.08" fill="none" stroke="#151515" stroke-width="1.6"/>
<path d="M966,607.52 A46,11.88 0 0 0 1058,607.52 L1058,632.52 A46,11.88 0 0 1 966,632.52 Z" fill="#f6f6f6"/>
<path d="M985.2,616.2 L993.9,616.2 L995.5,644.2 L979.3,644.2 Z" fill="#5a5d61"/>
<path d="M1026.0,616.6 L1034.7,616.6 L1040.3,644.6 L1024.1,644.6 Z" fill="#5a5d61"/>
<path d="M964,607.52 L974.56,617.024 L972.64,641.43 L964,632.52 Z" fill="#3a3c3f"/>
<path d="M1060,607.52 L1050.4,617.024 L1052.32,641.43 L1060,632.52 Z" fill="#3a3c3f"/>
<ellipse cx="1012" cy="607.52" rx="47" ry="11.88" fill="#2a2b2d" stroke="#1a1a1a" stroke-width="1"/>
<path d="M964,632.52 A48,11.88 0 0 0 1060,632.52" fill="none" stroke="#151515" stroke-width="1"/>
<path d="M984.6,599.12 V609.92 A32.400000000000006,10.8 0 0 0 1049.4,609.92 V599.12 Z" fill="#a9a5a2" stroke="#1a1a1a" stroke-width="0.8"/>
<path d="M984.6,609.92 A32.400000000000006,10.8 0 0 0 1049.4,609.92 L1049.4,605.5999999999999 A32.400000000000006,10.8 0 0 1 984.6,605.5999999999999 Z" fill="#d9d6d2"/>
<ellipse cx="1017" cy="599.12" rx="32.400000000000006" ry="10.8" fill="#f4f4f4" stroke="#1a1a1a" stroke-width="0.8"/>
<path d="M1036.9,561.3 C1070,550 1090,541 1113.8,535 C1140,528 1165,523 1188.8,520 C1210,517 1225,515 1235.6,515.3 C1248,516 1254,519 1252.5,523 C1250,526 1248,527 1245,527.5 C1220,534 1195,540 1170,546.3 C1145,553 1120,560 1095,566.9 C1075,572 1060,577 1048.1,581.9 L1038.75,583.75 Z" fill="#36e620" stroke="#1a1a1a" stroke-width="1.4"/>
<path d="M991,567 L982.5,565.6 C930,579 860,597 790,620 C780,623 772,627 772.5,632 C773,640 780,648 790,648.75 C810,648.5 825,648 840,647.5 C870,644 900,638 930,630 C960,621 990,610 1014,597 Z" fill="#36e620" stroke="#1a1a1a" stroke-width="1.4"/>
<path d="M993.24,573.44 V594.8 A23.76,11.34 0 0 0 1040.76,594.8 V573.44 Z" fill="#26b81a" stroke="#1a1a1a" stroke-width="1"/>
<ellipse cx="1017" cy="573.44" rx="23.76" ry="11.34" fill="#38dc22" stroke="#1a1a1a" stroke-width="1"/>
<path d="M1000.26,554.2399999999999 L1008.63,546.68 L1025.37,546.68 L1033.74,554.2399999999999 V569.36 L1025.37,574.76 L1008.63,574.76 L1000.26,569.36 Z" fill="#b5b0ab" stroke="#1a1a1a" stroke-width="0.9"/>
<path d="M1008.63,557.4799999999999 V574.76 M1025.37,557.4799999999999 V574.76" fill="none" stroke="#444" stroke-width="0.8"/>
<path d="M1008.63,557.4799999999999 L1025.37,557.4799999999999 L1025.37,574.76 L1008.63,574.76 Z" fill="#9c9792"/>
<ellipse cx="1017" cy="553.16" rx="10.8" ry="5.94" fill="#dcdcdc" stroke="#333" stroke-width="0.8"/>
<ellipse cx="1017" cy="551.0" rx="8.64" ry="4.32" fill="#f2f2f2" stroke="#555" stroke-width="0.6"/>
<path d="M212,658 V642" stroke="#1e7a2a" stroke-width="2.4"/>
<path d="M208.5,643 L212,635 L215.5,643 Z" fill="#3aa84a"/>
<path d="M212,658 H231" stroke="#c02a2a" stroke-width="2.4"/><path d="M230,654.5 l7,3.5 l-7,3.5z" fill="#c82a2a"/>
<path d="M212,658 L209,665" stroke="#1a2a90" stroke-width="2.2"/><circle cx="209.5" cy="666" r="3.6" fill="#1a2ad0"/><path d="M207,669 l-1.5,4" stroke="#555" stroke-width="0.8"/>
<text x="209" y="634" font-size="7.5" fill="#666" font-family="Liberation Sans">Y</text><text x="237" y="662" font-size="8" fill="#c66" font-family="Liberation Sans">X</text></svg>
<!--/DRONE-->
<!--HUD-->
<svg class="a" style="left:590px;top:96px" width="280" height="22">
 <g transform="translate(14,10)"><circle r="6" fill="#eef2f6" stroke="#8a8d92" stroke-width="1.5"/><path d="M4 4l6 6" stroke="#7a7d82" stroke-width="2.2"/><path d="M-2-2h4v4h-4z" fill="none" stroke="#888" stroke-width="0.8"/></g>
 <g transform="translate(35,10)"><circle r="6" fill="#eef2f6" stroke="#8a8d92" stroke-width="1.5" stroke-dasharray="2 1"/><path d="M4 4l6 6" stroke="#7a7d82" stroke-width="2.2"/></g>
 <g transform="translate(57,10)"><path d="M-7-6l10 10" stroke="#5aa0d8" stroke-width="5"/><path d="M-7-6l10 10" stroke="#cfe6f6" stroke-width="2"/><path d="M2-4h7M6-7l-4 3l4 3" stroke="#3a7ac0" stroke-width="1.3" fill="none"/></g>
 <g transform="translate(78,10)"><path d="M-6 7v-10a6 5 0 0 1 12 0v10h-3v-9a3 2 0 0 0-6 0v9z" fill="#e0d070" stroke="#3a6aa0" stroke-width="1.2"/></g>
 <g transform="translate(100,10)"><path d="M-7-4l4-4h10v11l-4 4h-10z" fill="#cfe0f4" stroke="#4a70a0"/><path d="M-7-4h10v11M3-4l4-4" fill="none" stroke="#4a70a0"/><path d="M0-6v5M5 2h-5" stroke="#d03030" stroke-width="1.2"/></g>
 <path d="M113 11l2 2l2-2z" fill="#444"/>
 <g transform="translate(131,10)"><path d="M-7-4l4-4h10v11l-4 4h-10z" fill="#b8d4f0" stroke="#4a6a90"/><path d="M-7-4h10v11M3-4l4-4" fill="none" stroke="#4a6a90"/><rect x="-6" y="-3" width="8" height="10" fill="#f6fafe"/></g>
 <path d="M145 11l2 2l2-2z" fill="#444"/>
 <g transform="translate(163,10)"><path d="M-8 2c0-6 4-6 4-2s-4 6-2 6 3-4 6-4 2 5 5 3 2-6 4-6" fill="none" stroke="#888" stroke-width="1.5"/></g>
 <path d="M177 11l2 2l2-2z" fill="#444"/>
 <g transform="translate(196,10)"><circle r="7" fill="#3aa84a"/><path d="M0 0v-7a7 7 0 0 1 7 7z" fill="#e83a2a"/><path d="M0 0h7a7 7 0 0 1-7 7a7 7 0 0 1-7-7z" fill="#f0c020"/><path d="M0 0h-7a7 7 0 0 1 7-7z" fill="#3a7ae0"/></g>
 <g transform="translate(217,9)"><circle r="6" fill="#3aa84a"/><path d="M0 0v-6a6 6 0 0 1 6 6z" fill="#e83a2a"/><path d="M0 0h-6a6 6 0 0 1 6-6z" fill="#3a7ae0"/><path d="M-7 9l3-4M-2 10l1-4M3 10l-1-4M8 9l-3-4" stroke="#333" stroke-width="1.5"/></g>
 <path d="M231 11l2 2l2-2z" fill="#444"/>
 <g transform="translate(250,10)"><rect x="-8" y="-7" width="15" height="11" fill="#dfe6ee" stroke="#666"/><path d="M-6 2l4-4l3 2l5-5" stroke="#d0a020" fill="none" stroke-width="1.5"/><path d="M-3 6h6v2h-6z" fill="#777"/></g>
 <path d="M264 11l2 2l2-2z" fill="#444"/>
</svg>
<svg class="a" style="left:1198px;top:97px" width="82" height="14">
 <rect x="4" y="2" width="9" height="9" fill="none" stroke="#888"/><rect x="6.5" y="4.5" width="4" height="4" fill="none" stroke="#999" stroke-width="0.7"/>
 <rect x="19" y="2" width="9" height="9" fill="none" stroke="#888"/><rect x="21.5" y="4.5" width="4" height="4" fill="none" stroke="#999" stroke-width="0.7"/>
 <rect x="35" y="8" width="8" height="2" fill="#999"/>
 <rect x="52" y="2" width="8" height="6" fill="none" stroke="#888"/><rect x="49" y="5" width="8" height="6" fill="#fff" stroke="#888"/>
 <path d="M65 2l8 9M73 2l-8 9" stroke="#999" stroke-width="1.5"/>
</svg>
<div class="a" style="left:1251px;top:134px;width:29px;height:26px;background:#aeb1b6;border:1px solid #6a6d72;border-right:none"></div>
<div class="a" style="left:1251px;top:161px;width:29px;height:26px;background:#aeb1b6;border:1px solid #6a6d72;border-right:none"></div>
<div class="a" style="left:1251px;top:188px;width:29px;height:26px;background:#aeb1b6;border:1px solid #6a6d72;border-right:none"></div>
<div class="a" style="left:1251px;top:214px;width:29px;height:26px;background:#aeb1b6;border:1px solid #6a6d72;border-right:none"></div>
<div class="a" style="left:1251px;top:241px;width:29px;height:26px;background:#aeb1b6;border:1px solid #6a6d72;border-right:none"></div>
<div class="a" style="left:1251px;top:267px;width:29px;height:26px;background:#eceef1;border:1px solid #6a6d72;border-right:none"></div>
<div class="a" style="left:1251px;top:294px;width:29px;height:26px;background:#aeb1b6;border:1px solid #6a6d72;border-right:none"></div>
<svg class="a" style="left:1251px;top:134px" width="29" height="186">
 <g transform="translate(15,13)"><rect x="-7" y="-6" width="11" height="8" fill="#6aa0e0" stroke="#3a6aa0"/><rect x="-3" y="-2" width="10" height="7" fill="#8ed08e" stroke="#4a904a"/></g>
 <g transform="translate(15,40)"><path d="M-7 0l7-7l7 7v6h-14z" fill="#f2d070" stroke="#8a6a20"/><rect x="-2" y="1" width="4" height="5" fill="#b08040"/></g>
 <g transform="translate(15,67)"><rect x="-7" y="-2" width="4" height="8" fill="#4ab04a"/><rect x="-2" y="-6" width="4" height="12" fill="#f0d060" stroke="#8a7020" stroke-width="0.6"/><rect x="3" y="-4" width="4" height="10" fill="#4a90e0"/></g>
 <g transform="translate(15,93)"><path d="M-7-4h5l1 2h8v8h-14z" fill="#f2d478" stroke="#a88420"/></g>
 <g transform="translate(15,120)"><rect x="-6" y="-7" width="12" height="10" fill="#fff" stroke="#666" stroke-width="0.8"/><path d="M-6-3h12M0-7v10" stroke="#888" stroke-width="0.6"/><path d="M-7 6h6M-3 4l2 2l-2 2" stroke="#2a4ab0" stroke-width="1.2" fill="none"/></g>
 <g transform="translate(15,146)"><circle r="6" fill="#3aa84a"/><path d="M0 0v-6a6 6 0 0 1 6 6z" fill="#e83a2a"/><path d="M0 0h-6a6 6 0 0 1 6-6z" fill="#3a7ae0"/><circle r="3" fill="#f4f4f4" opacity="0.6"/></g>
 <g transform="translate(15,173)"><rect x="-6" y="-3" width="12" height="9" fill="#f2ecd8" stroke="#777"/><path d="M-6-3l5-4h7" fill="none" stroke="#777"/><path d="M2-6l4-2" stroke="#c33" stroke-width="1.2"/></g>
</svg>
<div class="a" style="left:1279px;top:94px;width:1px;height:607px;background:#8a8d92"></div>
<!--/HUD-->
<div id="status" class="a"></div>
<!-- feature manager -->
<div class="a" style="left:0;top:109px;width:177px;height:23px;background:#dfe2e6"></div>
<div class="a" style="left:1px;top:113px;width:22px;height:19px;background:#f3f4f6;border:1px solid #5a5d62;border-bottom:none"></div>
<div class="a" style="left:23px;top:113px;width:22px;height:19px;background:#a9acb1;border:1px solid #5a5d62;border-bottom:none"></div>
<div class="a" style="left:46px;top:113px;width:22px;height:19px;background:#a9acb1;border:1px solid #5a5d62;border-bottom:none"></div>
<div class="a" style="left:69px;top:113px;width:22px;height:19px;background:#a9acb1;border:1px solid #5a5d62;border-bottom:none"></div>
<svg class="a" style="left:0;top:112px" width="100" height="22">
<path d="M6 8l6-4l6 3v5l-6 4l-6-3z" fill="#2fb52f" stroke="#8a7a10" stroke-width="1.5"/>
<rect x="29" y="8" width="11" height="9" fill="#ddd8cc" stroke="#8a7a55"/><path d="M29 8l5-3h6" fill="none" stroke="#8a7a55"/>
<rect x="53" y="6" width="4" height="4" fill="#f0e060" stroke="#665"/><rect x="57" y="12" width="4" height="4" fill="#f0e060" stroke="#665"/><path d="M51 5v13" stroke="#666"/>
<circle cx="80" cy="11" r="6" fill="#e8b020"/><path d="M74 11a6 6 0 0 1 12 0z" fill="#c33"/><path d="M80 5a6 6 0 0 1 6 6h-6z" fill="#2a60c0"/>
</svg>
<div class="a" style="left:165px;top:113px;font-size:12px;line-height:14px;color:#333">&raquo;</div>
<div class="a" style="left:0;top:131px;width:177px;height:2px;background:#9a9da2"></div>
<div class="a" style="left:2px;top:133px;width:173px;height:11px;background:#f6f7f8;border-bottom:1px solid #7c7f84"></div>
<svg class="a" style="left:4px;top:133px" width="20" height="11"><path d="M1 1h8l-3 4v4h-2v-4z" fill="#2a8ae0" stroke="#16609f" stroke-width="0.6"/><path d="M12 4l2 2l2-2z" fill="#333"/></svg>





<div class="a" style="left:0;top:686px;width:165px;height:13px;background:#eef0f2"></div>
<div class="a" style="left:14px;top:687px;width:42px;height:11px;background:#e0e3e6;border:1px solid #c0c3c7"></div>
<div class="a" style="left:30px;top:689px;width:6px;height:6px;border-left:1px solid #888;border-right:1px solid #888"></div>
<div class="a" style="left:4px;top:689px;width:0;height:0;border-top:3px solid transparent;border-bottom:3px solid transparent;border-right:3px solid #555"></div>
<div class="a" style="left:156px;top:689px;width:0;height:0;border-top:3px solid transparent;border-bottom:3px solid transparent;border-left:3px solid #555"></div>
<div class="a" style="left:176px;top:385px;width:7px;height:27px;background:#e9ebee;border:1px solid #999"></div>
<div class="a" style="left:180px;top:391px;width:2px;height:2px;background:#333"></div><div class="a" style="left:180px;top:397px;width:2px;height:2px;background:#333"></div><div class="a" style="left:180px;top:403px;width:2px;height:2px;background:#333"></div>
<div class="row" style="left:15px;top:147.7px;color:#222">Assem2&nbsp;&nbsp;(Default&lt;Display St</div>
<div class="row" style="left:28px;top:165.0px;color:#222">History</div>
<div class="row" style="left:28px;top:182.4px;color:#222">Sensors</div>
<div class="row" style="left:28px;top:199.7px;color:#222">Annotations</div>
<div class="row" style="left:28px;top:217.0px;color:#222">Front Plane</div>
<div class="row" style="left:28px;top:234.3px;color:#222">Top Plane</div>
<div class="row" style="left:28px;top:251.7px;color:#222">Right Plane</div>
<div class="row" style="left:28px;top:269.0px;color:#222">Origin</div>
<div class="row" style="left:28px;top:286.3px;color:#222">1.Spider Base&lt;1&gt; (Default</div>
<div class="row" style="left:28px;top:303.7px;color:#222">11.Distribution board&lt;1&gt;</div>
<div class="row" style="left:28px;top:321.0px;color:#222">Assem1&lt;1&gt; (Default&lt;Disp</div>
<div class="row" style="left:28px;top:338.3px;color:#222">(-) 6.Spacer&lt;1&gt; (Default&lt;</div>
<div class="row" style="left:28px;top:355.7px;color:#222">(-) pan cross head_am&lt;1&gt;</div>
<div class="row" style="left:28px;top:373.0px;color:#222">3.Spider Arm&lt;1&gt; (Default</div>
<div class="row" style="left:28px;top:390.3px;color:#222">2.Spider Top&lt;1&gt; (Default</div>
<div class="row" style="left:28px;top:407.6px;color:#222">(-) pan cross head_am&lt;5&gt;</div>
<div class="row" style="left:28px;top:425.0px;color:#222">(-) hex nut style 2_am&lt;1&gt;</div>
<div class="row" style="left:28px;top:442.3px;color:#222">(-) pan cross head_am&lt;7&gt;</div>
<div class="a" style="left:27px;top:460px;width:137px;height:16px;background:#3399ff"></div>
<div class="row" style="left:28px;top:459.6px;color:#fff">(-) hex nut style 2_am&lt;3&gt;</div>
<div class="row" style="left:28px;top:477.0px;color:#222">10.Motor&lt;1&gt; (Default&lt;&lt;D</div>
<div class="row" style="left:28px;top:494.3px;color:#222">(-) pan cross head_am&lt;8&gt;</div>
<div class="row" style="left:28px;top:511.6px;color:#222">(-) pan cross head_am&lt;9&gt;</div>
<div class="row" style="left:28px;top:529.0px;color:#222">(-) pan cross head_am&lt;10</div>
<div class="row" style="left:28px;top:546.3px;color:#222">(-) 5.Spinner&lt;1&gt; (Default&lt;</div>
<div class="row" style="left:28px;top:563.6px;color:#222">(-) 9.Fan&lt;1&gt; (Default&lt;&lt;De</div>
<div class="row" style="left:28px;top:581.0px;color:#222">(-) hex nut style 2_am&lt;4&gt;</div>
<div class="row" style="left:28px;top:598.3px;color:#222">7.Elecrtical connector&lt;1&gt;</div>
<div class="row" style="left:28px;top:615.6px;color:#222">(-) 8.Piller&lt;1&gt; (Default&lt;&lt;D</div>
<div class="row" style="left:28px;top:632.9px;color:#222">(-) 9.Fan&lt;2&gt; (Default&lt;&lt;De</div>
<div class="row" style="left:28px;top:650.3px;color:#222">4.Battery&lt;1&gt; (Default&lt;&lt;D</div>
<div class="row" style="left:28px;top:667.6px;color:#222">Mates</div>
<svg class="a" style="left:0;top:146px" width="165" height="540">
<path d="M7 27V530" stroke="#a0a3a7" stroke-dasharray="1 1"/>
<path d="M3.0,7.0 L7.0,3.0 L11.0,6.0 L10.0,9.0 L14.0,11.0 L14.0,14.0 L10.0,17.0 L3.0,12.0 Z" fill="#3cb03c" stroke="#3a2a08" stroke-width="1.1"/><path d="M3.0,7.0 L10.0,12.0 L14.0,11.0 M10.0,12.0 V17.0" fill="none" stroke="#3a2a08" stroke-width="0.8"/>
<rect x="3.5" y="23.3" width="8" height="8" fill="#f2f3f5" stroke="#b8bbbf"/><path d="M5 27.3h5M7.5 24.8v5" stroke="#8a8d92"/>
<rect x="15" y="22.3" width="11" height="10" fill="#f0d878" stroke="#8a7020"/>
<path d="M8 44.7h5" stroke="#a0a3a7" stroke-dasharray="1 1"/>
<rect x="15" y="39.7" width="11" height="10" fill="#f0d878" stroke="#8a7020"/>
<rect x="3.5" y="58.0" width="8" height="8" fill="#f2f3f5" stroke="#b8bbbf"/><path d="M5 62.0h5M7.5 59.5v5" stroke="#8a8d92"/>
<rect x="15" y="57.0" width="11" height="10" fill="#f0d878" stroke="#8a7020"/>
<path d="M8 79.3h5" stroke="#a0a3a7" stroke-dasharray="1 1"/>
<path d="M16 75.3l4-1l6 6l-4 2z" fill="none" stroke="#777"/>
<path d="M8 96.6h5" stroke="#a0a3a7" stroke-dasharray="1 1"/>
<path d="M16 92.6l4-1l6 6l-4 2z" fill="none" stroke="#777"/>
<path d="M8 114.0h5" stroke="#a0a3a7" stroke-dasharray="1 1"/>
<path d="M16 110.0l4-1l6 6l-4 2z" fill="none" stroke="#777"/>
<path d="M8 131.3h5" stroke="#a0a3a7" stroke-dasharray="1 1"/>
<path d="M18 126.3v8h6" fill="none" stroke="#b03030" stroke-width="1.2"/>
<rect x="3.5" y="144.6" width="8" height="8" fill="#f2f3f5" stroke="#b8bbbf"/><path d="M5 148.6h5M7.5 146.1v5" stroke="#8a8d92"/>
<path d="M15.0,145.6 L19.0,141.6 L23.0,144.6 L22.0,147.6 L26.0,149.6 L26.0,152.6 L22.0,155.6 L15.0,150.6 Z" fill="#f0c040" stroke="#3a2a08" stroke-width="1.1"/><path d="M15.0,145.6 L22.0,150.6 L26.0,149.6 M22.0,150.6 V155.6" fill="none" stroke="#3a2a08" stroke-width="0.8"/>
<rect x="3.5" y="162.0" width="8" height="8" fill="#f2f3f5" stroke="#b8bbbf"/><path d="M5 166.0h5M7.5 163.5v5" stroke="#8a8d92"/>
<path d="M15.0,163.0 L19.0,159.0 L23.0,162.0 L22.0,165.0 L26.0,167.0 L26.0,170.0 L22.0,173.0 L15.0,168.0 Z" fill="#f0c040" stroke="#3a2a08" stroke-width="1.1"/><path d="M15.0,163.0 L22.0,168.0 L26.0,167.0 M22.0,168.0 V173.0" fill="none" stroke="#3a2a08" stroke-width="0.8"/>
<rect x="3.5" y="179.3" width="8" height="8" fill="#f2f3f5" stroke="#b8bbbf"/><path d="M5 183.3h5M7.5 180.8v5" stroke="#8a8d92"/>
<path d="M15.0,180.3 L19.0,176.3 L23.0,179.3 L22.0,182.3 L26.0,184.3 L26.0,187.3 L22.0,190.3 L15.0,185.3 Z" fill="#3cb03c" stroke="#3a2a08" stroke-width="1.1"/><path d="M15.0,180.3 L22.0,185.3 L26.0,184.3 M22.0,185.3 V190.3" fill="none" stroke="#3a2a08" stroke-width="0.8"/>
<rect x="3.5" y="196.6" width="8" height="8" fill="#f2f3f5" stroke="#b8bbbf"/><path d="M5 200.6h5M7.5 198.1v5" stroke="#8a8d92"/>
<path d="M15.0,197.6 L19.0,193.6 L23.0,196.6 L22.0,199.6 L26.0,201.6 L26.0,204.6 L22.0,207.6 L15.0,202.6 Z" fill="#f0c040" stroke="#3a2a08" stroke-width="1.1"/><path d="M15.0,197.6 L22.0,202.6 L26.0,201.6 M22.0,202.6 V207.6" fill="none" stroke="#3a2a08" stroke-width="0.8"/>
<rect x="3.5" y="214.0" width="8" height="8" fill="#f2f3f5" stroke="#b8bbbf"/><path d="M5 218.0h5M7.5 215.5v5" stroke="#8a8d92"/>
<path d="M16 213.0h8v3h-2v7h-4v-7h-2z" fill="#ddd" stroke="#333" stroke-width="1.2"/>
<rect x="3.5" y="231.3" width="8" height="8" fill="#f2f3f5" stroke="#b8bbbf"/><path d="M5 235.3h5M7.5 232.8v5" stroke="#8a8d92"/>
<path d="M15.0,232.3 L19.0,228.3 L23.0,231.3 L22.0,234.3 L26.0,236.3 L26.0,239.3 L22.0,242.3 L15.0,237.3 Z" fill="#f0c040" stroke="#3a2a08" stroke-width="1.1"/><path d="M15.0,232.3 L22.0,237.3 L26.0,236.3 M22.0,237.3 V242.3" fill="none" stroke="#3a2a08" stroke-width="0.8"/>
<rect x="3.5" y="248.6" width="8" height="8" fill="#f2f3f5" stroke="#b8bbbf"/><path d="M5 252.6h5M7.5 250.1v5" stroke="#8a8d92"/>
<path d="M15.0,249.6 L19.0,245.6 L23.0,248.6 L22.0,251.6 L26.0,253.6 L26.0,256.6 L22.0,259.6 L15.0,254.6 Z" fill="#f0c040" stroke="#3a2a08" stroke-width="1.1"/><path d="M15.0,249.6 L22.0,254.6 L26.0,253.6 M22.0,254.6 V259.6" fill="none" stroke="#3a2a08" stroke-width="0.8"/>
<rect x="3.5" y="265.9" width="8" height="8" fill="#f2f3f5" stroke="#b8bbbf"/><path d="M5 269.9h5M7.5 267.4v5" stroke="#8a8d92"/>
<path d="M16 264.9h8v3h-2v7h-4v-7h-2z" fill="#ddd" stroke="#333" stroke-width="1.2"/>
<rect x="3.5" y="283.3" width="8" height="8" fill="#f2f3f5" stroke="#b8bbbf"/><path d="M5 287.3h5M7.5 284.8v5" stroke="#8a8d92"/>
<path d="M16 282.3h8v3h-2v7h-4v-7h-2z" fill="#ddd" stroke="#333" stroke-width="1.2"/>
<rect x="3.5" y="300.6" width="8" height="8" fill="#f2f3f5" stroke="#b8bbbf"/><path d="M5 304.6h5M7.5 302.1v5" stroke="#8a8d92"/>
<path d="M16 299.6h8v3h-2v7h-4v-7h-2z" fill="#ddd" stroke="#333" stroke-width="1.2"/>
<rect x="3.5" y="317.9" width="8" height="8" fill="#f2f3f5" stroke="#b8bbbf"/><path d="M5 321.9h5M7.5 319.4v5" stroke="#8a8d92"/>
<path d="M16 316.9h8v3h-2v7h-4v-7h-2z" fill="#ddd" stroke="#1a5ad0" stroke-width="1.2"/>
<rect x="3.5" y="335.3" width="8" height="8" fill="#f2f3f5" stroke="#b8bbbf"/><path d="M5 339.3h5M7.5 336.8v5" stroke="#8a8d92"/>
<path d="M15.0,336.3 L19.0,332.3 L23.0,335.3 L22.0,338.3 L26.0,340.3 L26.0,343.3 L22.0,346.3 L15.0,341.3 Z" fill="#f0c040" stroke="#3a2a08" stroke-width="1.1"/><path d="M15.0,336.3 L22.0,341.3 L26.0,340.3 M22.0,341.3 V346.3" fill="none" stroke="#3a2a08" stroke-width="0.8"/>
<rect x="3.5" y="352.6" width="8" height="8" fill="#f2f3f5" stroke="#b8bbbf"/><path d="M5 356.6h5M7.5 354.1v5" stroke="#8a8d92"/>
<path d="M16 351.6h8v3h-2v7h-4v-7h-2z" fill="#ddd" stroke="#333" stroke-width="1.2"/>
<rect x="3.5" y="369.9" width="8" height="8" fill="#f2f3f5" stroke="#b8bbbf"/><path d="M5 373.9h5M7.5 371.4v5" stroke="#8a8d92"/>
<path d="M16 368.9h8v3h-2v7h-4v-7h-2z" fill="#ddd" stroke="#333" stroke-width="1.2"/>
<rect x="3.5" y="387.3" width="8" height="8" fill="#f2f3f5" stroke="#b8bbbf"/><path d="M5 391.3h5M7.5 388.8v5" stroke="#8a8d92"/>
<path d="M16 386.3h8v3h-2v7h-4v-7h-2z" fill="#ddd" stroke="#333" stroke-width="1.2"/>
<rect x="3.5" y="404.6" width="8" height="8" fill="#f2f3f5" stroke="#b8bbbf"/><path d="M5 408.6h5M7.5 406.1v5" stroke="#8a8d92"/>
<path d="M15.0,405.6 L19.0,401.6 L23.0,404.6 L22.0,407.6 L26.0,409.6 L26.0,412.6 L22.0,415.6 L15.0,410.6 Z" fill="#f0c040" stroke="#3a2a08" stroke-width="1.1"/><path d="M15.0,405.6 L22.0,410.6 L26.0,409.6 M22.0,410.6 V415.6" fill="none" stroke="#3a2a08" stroke-width="0.8"/>
<rect x="3.5" y="421.9" width="8" height="8" fill="#f2f3f5" stroke="#b8bbbf"/><path d="M5 425.9h5M7.5 423.4v5" stroke="#8a8d92"/>
<path d="M15.0,422.9 L19.0,418.9 L23.0,421.9 L22.0,424.9 L26.0,426.9 L26.0,429.9 L22.0,432.9 L15.0,427.9 Z" fill="#f0c040" stroke="#3a2a08" stroke-width="1.1"/><path d="M15.0,422.9 L22.0,427.9 L26.0,426.9 M22.0,427.9 V432.9" fill="none" stroke="#3a2a08" stroke-width="0.8"/>
<rect x="3.5" y="439.2" width="8" height="8" fill="#f2f3f5" stroke="#b8bbbf"/><path d="M5 443.2h5M7.5 440.8v5" stroke="#8a8d92"/>
<path d="M16 438.2h8v3h-2v7h-4v-7h-2z" fill="#ddd" stroke="#333" stroke-width="1.2"/>
<rect x="3.5" y="456.6" width="8" height="8" fill="#f2f3f5" stroke="#b8bbbf"/><path d="M5 460.6h5M7.5 458.1v5" stroke="#8a8d92"/>
<path d="M15.0,457.6 L19.0,453.6 L23.0,456.6 L22.0,459.6 L26.0,461.6 L26.0,464.6 L22.0,467.6 L15.0,462.6 Z" fill="#f0c040" stroke="#3a2a08" stroke-width="1.1"/><path d="M15.0,457.6 L22.0,462.6 L26.0,461.6 M22.0,462.6 V467.6" fill="none" stroke="#3a2a08" stroke-width="0.8"/>
<rect x="3.5" y="473.9" width="8" height="8" fill="#f2f3f5" stroke="#b8bbbf"/><path d="M5 477.9h5M7.5 475.4v5" stroke="#8a8d92"/>
<path d="M15.0,474.9 L19.0,470.9 L23.0,473.9 L22.0,476.9 L26.0,478.9 L26.0,481.9 L22.0,484.9 L15.0,479.9 Z" fill="#f0c040" stroke="#3a2a08" stroke-width="1.1"/><path d="M15.0,474.9 L22.0,479.9 L26.0,478.9 M22.0,479.9 V484.9" fill="none" stroke="#3a2a08" stroke-width="0.8"/>
<rect x="3.5" y="491.2" width="8" height="8" fill="#f2f3f5" stroke="#b8bbbf"/><path d="M5 495.2h5M7.5 492.7v5" stroke="#8a8d92"/>
<path d="M15.0,492.2 L19.0,488.2 L23.0,491.2 L22.0,494.2 L26.0,496.2 L26.0,499.2 L22.0,502.2 L15.0,497.2 Z" fill="#f0c040" stroke="#3a2a08" stroke-width="1.1"/><path d="M15.0,492.2 L22.0,497.2 L26.0,496.2 M22.0,497.2 V502.2" fill="none" stroke="#3a2a08" stroke-width="0.8"/>
<rect x="3.5" y="508.6" width="8" height="8" fill="#f2f3f5" stroke="#b8bbbf"/><path d="M5 512.6h5M7.5 510.1v5" stroke="#8a8d92"/>
<path d="M15.0,509.6 L19.0,505.6 L23.0,508.6 L22.0,511.6 L26.0,513.6 L26.0,516.6 L22.0,519.6 L15.0,514.6 Z" fill="#f0c040" stroke="#3a2a08" stroke-width="1.1"/><path d="M15.0,509.6 L22.0,514.6 L26.0,513.6 M22.0,514.6 V519.6" fill="none" stroke="#3a2a08" stroke-width="0.8"/>
<rect x="3.5" y="525.9" width="8" height="8" fill="#f2f3f5" stroke="#b8bbbf"/><path d="M5 529.9h5M7.5 527.4v5" stroke="#8a8d92"/>
<path d="M15 524.9h4v10h-4zM21 524.9h4v10h-4z" fill="#ccc" stroke="#555"/>
</svg>
<div class="a" style="left:165px;top:145px;width:12px;height:541px;background:#eceef1"></div>
<div class="a" style="left:166px;top:162px;width:11px;height:318px;background:linear-gradient(90deg,#e4e6ea,#f6f7f9 50%,#e0e3e7);border:1px solid #c4c7cb;border-radius:2px"></div>
<div class="a" style="left:167px;top:148px;width:0;height:0;border-left:4px solid transparent;border-right:4px solid transparent;border-bottom:4px solid #333"></div>
<div class="a" style="left:167px;top:677px;width:0;height:0;border-left:4px solid transparent;border-right:4px solid transparent;border-top:4px solid #777"></div>
<div class="a" style="left:168px;top:318px;width:5px;height:6px;border-top:1px solid #777;border-bottom:1px solid #777"></div>
<!-- status -->
<div class="st" style="left:2px">SolidWorks Premium 2014 x64 Edition</div>
<div class="st" style="left:949px">Under Defined</div>
<div class="st" style="left:1037px">Editing Assembly</div>
<div class="st" style="left:1162px">MMGS</div>
<div class="a" style="left:1210px;top:710px;width:0;height:0;border-left:2px solid transparent;border-right:2px solid transparent;border-bottom:2px solid #333"></div>
<div class="a" style="left:1226px;top:704px;width:9px;height:10px;background:#eaffea;border:1px solid #2a9a2a;font-size:8px;line-height:8px;color:#2a9a2a;text-align:center">?</div>
<svg class="a" style="left:1262px;top:702px" width="16" height="14"><path d="M2 10l8-8l4 4l-8 8z" fill="#f0d030" stroke="#a08010"/></svg>
<div class="a" style="left:0;top:718px;width:1280px;height:2px;background:#6b6e73"></div>
</body></html>
